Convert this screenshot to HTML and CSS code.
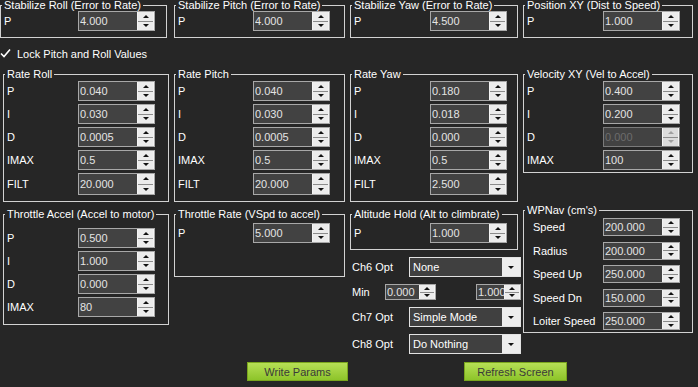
FILE: index.html
```html
<!DOCTYPE html>
<html lang="en">
<head>
  <meta charset="UTF-8">
  <title>Extended Tuning</title>
  <link rel="stylesheet" href="styles.css">
</head>
<body>
<div class="screen">

  <div class="grid">
    <fieldset class="box top first">
      <legend>Stabilize Roll (Error to Rate)</legend>
      <div class="row"><label>P</label><div class="num"><input value="4.000"><span class="spin"><i class="up"></i><i class="dn"></i></span></div></div>
    </fieldset>
    <fieldset class="box top">
      <legend>Stabilize Pitch (Error to Rate)</legend>
      <div class="row"><label>P</label><div class="num"><input value="4.000"><span class="spin"><i class="up"></i><i class="dn"></i></span></div></div>
    </fieldset>
    <fieldset class="box top">
      <legend>Stabilize Yaw (Error to Rate)</legend>
      <div class="row"><label>P</label><div class="num"><input value="4.500"><span class="spin"><i class="up"></i><i class="dn"></i></span></div></div>
    </fieldset>
    <fieldset class="box top">
      <legend>Position XY (Dist to Speed)</legend>
      <div class="row"><label>P</label><div class="num"><input value="1.000"><span class="spin"><i class="up"></i><i class="dn"></i></span></div></div>
    </fieldset>
  </div>

  <label class="lock">
    <svg width="11" height="11" viewBox="0 0 11 11"><polyline points="1,5.5 4,8.5 10,1.5" fill="none" stroke="#fff" stroke-width="1.6"/></svg>
    Lock Pitch and Roll Values
  </label>

  <div class="grid">
    <fieldset class="box rate">
      <legend>Rate Roll</legend>
      <div class="row"><label>P</label><div class="num"><input value="0.040"><span class="spin"><i class="up"></i><i class="dn"></i></span></div></div>
      <div class="row"><label>I</label><div class="num"><input value="0.030"><span class="spin"><i class="up"></i><i class="dn"></i></span></div></div>
      <div class="row"><label>D</label><div class="num"><input value="0.0005"><span class="spin"><i class="up"></i><i class="dn"></i></span></div></div>
      <div class="row"><label>IMAX</label><div class="num"><input value="0.5"><span class="spin"><i class="up"></i><i class="dn"></i></span></div></div>
      <div class="row tall"><label>FILT</label><div class="num"><input value="20.000"><span class="spin"><i class="up"></i><i class="dn"></i></span></div></div>
    </fieldset>
    <fieldset class="box rate">
      <legend>Rate Pitch</legend>
      <div class="row"><label>P</label><div class="num"><input value="0.040"><span class="spin"><i class="up"></i><i class="dn"></i></span></div></div>
      <div class="row"><label>I</label><div class="num"><input value="0.030"><span class="spin"><i class="up"></i><i class="dn"></i></span></div></div>
      <div class="row"><label>D</label><div class="num"><input value="0.0005"><span class="spin"><i class="up"></i><i class="dn"></i></span></div></div>
      <div class="row"><label>IMAX</label><div class="num"><input value="0.5"><span class="spin"><i class="up"></i><i class="dn"></i></span></div></div>
      <div class="row tall"><label>FILT</label><div class="num"><input value="20.000"><span class="spin"><i class="up"></i><i class="dn"></i></span></div></div>
    </fieldset>
    <fieldset class="box rate">
      <legend>Rate Yaw</legend>
      <div class="row"><label>P</label><div class="num"><input value="0.180"><span class="spin"><i class="up"></i><i class="dn"></i></span></div></div>
      <div class="row"><label>I</label><div class="num"><input value="0.018"><span class="spin"><i class="up"></i><i class="dn"></i></span></div></div>
      <div class="row"><label>D</label><div class="num"><input value="0.000"><span class="spin"><i class="up"></i><i class="dn"></i></span></div></div>
      <div class="row"><label>IMAX</label><div class="num"><input value="0.5"><span class="spin"><i class="up"></i><i class="dn"></i></span></div></div>
      <div class="row tall"><label>FILT</label><div class="num"><input value="2.500"><span class="spin"><i class="up"></i><i class="dn"></i></span></div></div>
    </fieldset>
    <fieldset class="box velocity">
      <legend>Velocity XY (Vel to Accel)</legend>
      <div class="row"><label>P</label><div class="num"><input value="0.400"><span class="spin"><i class="up"></i><i class="dn"></i></span></div></div>
      <div class="row"><label>I</label><div class="num"><input value="0.200"><span class="spin"><i class="up"></i><i class="dn"></i></span></div></div>
      <div class="row"><label>D</label><div class="num disabled"><input value="0.000" disabled><span class="spin"><i class="up"></i><i class="dn"></i></span></div></div>
      <div class="row"><label>IMAX</label><div class="num"><input value="100"><span class="spin"><i class="up"></i><i class="dn"></i></span></div></div>
    </fieldset>
  </div>

  <div class="grid lower">
    <fieldset class="box accel">
      <legend>Throttle Accel (Accel to motor)</legend>
      <div class="row"><label>P</label><div class="num"><input value="0.500"><span class="spin"><i class="up"></i><i class="dn"></i></span></div></div>
      <div class="row"><label>I</label><div class="num"><input value="1.000"><span class="spin"><i class="up"></i><i class="dn"></i></span></div></div>
      <div class="row"><label>D</label><div class="num"><input value="0.000"><span class="spin"><i class="up"></i><i class="dn"></i></span></div></div>
      <div class="row"><label>IMAX</label><div class="num"><input value="80"><span class="spin"><i class="up"></i><i class="dn"></i></span></div></div>
    </fieldset>
    <fieldset class="box thr-rate">
      <legend>Throttle Rate (VSpd to accel)</legend>
      <div class="row"><label>P</label><div class="num"><input value="5.000"><span class="spin"><i class="up"></i><i class="dn"></i></span></div></div>
    </fieldset>
    <div class="col">
      <fieldset class="box alt">
        <legend>Altitude Hold (Alt to climbrate)</legend>
        <div class="row"><label>P</label><div class="num"><input value="1.000"><span class="spin"><i class="up"></i><i class="dn"></i></span></div></div>
      </fieldset>
      <div class="opts">
        <div class="opt"><label>Ch6 Opt</label><div class="combo"><span>None</span><b></b></div></div>
        <div class="opt minmax">
          <label class="short">Min</label>
          <div class="num small"><input value="0.000"><span class="spin"><i class="up"></i><i class="dn"></i></span></div>
          <div class="num small max"><input value="1.000"><span class="spin"><i class="up"></i><i class="dn"></i></span></div>
        </div>
        <div class="opt"><label>Ch7 Opt</label><div class="combo"><span>Simple Mode</span><b></b></div></div>
        <div class="opt"><label>Ch8 Opt</label><div class="combo"><span>Do Nothing</span><b></b></div></div>
      </div>
    </div>
    <fieldset class="box wpnav">
      <legend>WPNav (cm's)</legend>
      <div class="row"><label>Speed</label><div class="num"><input value="200.000"><span class="spin"><i class="up"></i><i class="dn"></i></span></div></div>
      <div class="row"><label>Radius</label><div class="num"><input value="200.000"><span class="spin"><i class="up"></i><i class="dn"></i></span></div></div>
      <div class="row"><label>Speed Up</label><div class="num"><input value="250.000"><span class="spin"><i class="up"></i><i class="dn"></i></span></div></div>
      <div class="row"><label>Speed Dn</label><div class="num"><input value="150.000"><span class="spin"><i class="up"></i><i class="dn"></i></span></div></div>
      <div class="row"><label>Loiter Speed</label><div class="num"><input value="250.000"><span class="spin"><i class="up"></i><i class="dn"></i></span></div></div>
    </fieldset>
  </div>

  <div class="actions">
    <button class="btn write">Write Params</button>
    <button class="btn refresh">Refresh Screen</button>
  </div>

</div>
</body>
</html>
```

FILE: styles.css
```css
body {
  margin: 0;
  background: #262626;
  color: #fff;
  font-family: "Liberation Sans", Arial, sans-serif;
  font-size: 11px;
}

.screen {
  width: 698px;
  height: 387px;
  padding-left: 3px;
  box-sizing: border-box;
  overflow: hidden;
}

.grid {
  display: grid;
  grid-template-columns: 166px 171px 168px 170px;
  column-gap: 5px;
  align-items: start;
}

.grid > :nth-child(1) { --lw: 71px; }
.grid > :nth-child(2) { --lw: 75px; }
.grid > :nth-child(3) { --lw: 76px; }
.grid > :nth-child(4) { --lw: 76px; }

.box {
  margin: 0;
  padding: 0 3px 6px 3px;
  border: 1px solid #d2d2d2;
  min-width: 0;
}

.box legend {
  margin-left: -2px;
  padding: 0 2px;
  line-height: 11px;
  white-space: nowrap;
}

.row {
  display: flex;
  align-items: center;
  height: 20px;
}

.row + .row {
  margin-top: 3px;
}

.row label {
  width: var(--lw);
  flex: none;
}

.row.tall {
  height: 22px;
}

.row.tall .num {
  height: 22px;
}

/* numeric up/down */
.num {
  display: flex;
  width: 77px;
  height: 20px;
  box-sizing: border-box;
  border: 1px solid #a8a8a8;
  background: #424242;
  flex: none;
}

.num input {
  flex: 1;
  min-width: 0;
  border: 0;
  padding: 0 0 0 1px;
  background: transparent;
  color: #e4e4e4;
  font: inherit;
  outline: none;
}

.spin {
  width: 15px;
  display: flex;
  flex-direction: column;
  gap: 1px;
  background: #8c8c8c;
  border: 1px solid #f4f4f4;
  border-top-width: 0;
  border-bottom-width: 0;
}

.spin i {
  flex: 1;
  display: flex;
  align-items: center;
  justify-content: center;
  background: #ececec;
}

.spin i::after {
  content: "";
  border-left: 3px solid transparent;
  border-right: 3px solid transparent;
}

.spin .up::after {
  border-bottom: 3px solid #111;
}

.spin .dn::after {
  border-top: 3px solid #111;
}

.num.disabled {
  border-color: #7a7a7a;
}

.num.disabled input {
  color: #6c6c6c;
}

.num.disabled .spin i {
  background: #dcdcdc;
}

.num.disabled .spin .up::after {
  border-bottom-color: #a0a0a0;
}

.num.disabled .spin .dn::after {
  border-top-color: #a0a0a0;
}

/* checkbox line */
.lock {
  display: flex;
  align-items: center;
  gap: 6px;
  height: 31px;
  margin-left: -3px;
}

/* boxes that need their own spacing */
.top {
  padding-bottom: 6px;
}

.grid > .first {
  margin-left: -3px;
  margin-right: 2px;
  --lw: 74px;
}

.rate {
  padding-top: 1px;
}

.velocity {
  padding-top: 1px;
  padding-bottom: 2px;
}

.lower {
  margin-top: 7px;
}

.accel {
  padding-top: 8px;
  padding-bottom: 7px;
}

.thr-rate {
  padding-top: 3px;
  padding-bottom: 33px;
}

.alt {
  padding-top: 3px;
  padding-bottom: 6px;
}

.wpnav {
  margin-top: -4px;
  padding-top: 2px;
  padding-bottom: 2px;
}

.wpnav .row {
  height: 18px;
}

.wpnav .row + .row {
  margin-top: 5.5px;
}

.wpnav .num {
  height: 18px;
}

.wpnav .row label {
  padding-left: 6px;
  width: 70px;
}

/* channel options under altitude hold */
.opts {
  margin-right: -3px;
  padding-left: 2px;
}

.opt {
  display: flex;
  align-items: center;
  margin-top: 7px;
  height: 20px;
}

.opt label {
  width: 57px;
  flex: none;
}

.opt label.short {
  width: 33px;
}

.minmax {
  height: 16px;
}

.num.small {
  width: 51px;
  height: 16px;
}

.num.small .spin {
  width: 14px;
}

.num.small.max {
  width: 45px;
  margin-left: auto;
}

.combo {
  flex: 1;
  display: flex;
  height: 20px;
  box-sizing: border-box;
  border: 1px solid #e2e2e2;
  background: #404040;
}

.combo span {
  flex: 1;
  padding-left: 3px;
  line-height: 18px;
}

.combo b {
  width: 18px;
  display: flex;
  align-items: center;
  justify-content: center;
  background: #ededed;
}

.combo b::after {
  content: "";
  border-left: 3px solid transparent;
  border-right: 3px solid transparent;
  border-top: 3px solid #111;
}

/* buttons */
.actions {
  display: flex;
  gap: 116px;
  margin-top: 8px;
  padding-left: 244px;
}

.btn {
  height: 19px;
  padding: 0;
  border: 1px solid #7aa51d;
  background: linear-gradient(#b6df55, #8dc42a);
  color: #3a3a3a;
  font: inherit;
}

.write {
  width: 101px;
}

.refresh {
  width: 103px;
}
```
